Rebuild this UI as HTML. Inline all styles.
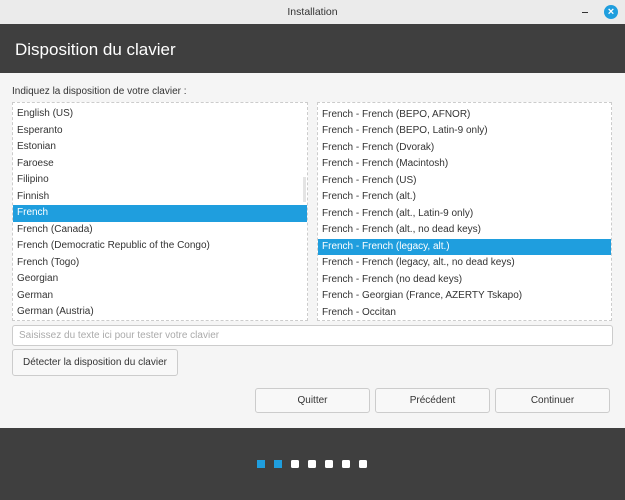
<!DOCTYPE html><html><head><style>
*{margin:0;padding:0;box-sizing:border-box}
body{width:625px;height:500px;background:#f5f5f5;font-family:"Liberation Sans",sans-serif;font-size:10px;color:#333;position:relative;overflow:hidden}
.a{position:absolute}
.tb{left:0;top:0;width:625px;height:24px;background:#ebebeb;text-align:center;line-height:24px;font-size:10.5px;color:#333}
.hd{left:0;top:24px;width:625px;height:49px;background:#3f3f3f;color:#fff;font-size:17px;padding-left:15px;line-height:51px}
.list{background:#fff;border:1px dashed #ccc;overflow:hidden}
.r{height:16.5px;line-height:16.5px;padding-left:4px;white-space:nowrap}
.s{background:#1f9ede;color:#fff}
.btn{background:#f8f8f8;border:1px solid #ccc;border-radius:3px;text-align:center;font-size:10px}
.d{top:460px;width:8px;height:8px;background:#fff;border-radius:1.5px}
.bt{left:0;top:428px;width:625px;height:72px;background:#3f3f3f}
</style></head><body>
<div class="a tb">Installation</div>
<div class="a" style="left:582px;top:12px;width:6px;height:1px;background:#333"></div>
<div class="a" style="left:604px;top:5px;width:14px;height:14px;border-radius:50%;background:#1f9ede;color:#fff;font-size:11px;font-weight:bold;line-height:14px;text-align:center">×</div>
<div class="a hd">Disposition du clavier</div>
<div class="a" style="left:12px;top:86px;font-size:10px">Indiquez la disposition de votre clavier :</div>
<div class="a list" style="left:12px;top:102px;width:296px;height:219px;padding-top:3px">
<div class="r">English (US)</div><div class="r">Esperanto</div><div class="r">Estonian</div><div class="r">Faroese</div><div class="r">Filipino</div><div class="r">Finnish</div><div class="r s">French</div><div class="r">French (Canada)</div><div class="r">French (Democratic Republic of the Congo)</div><div class="r">French (Togo)</div><div class="r">Georgian</div><div class="r">German</div><div class="r">German (Austria)</div>
</div>
<div class="a" style="left:303px;top:177px;width:3px;height:25px;background:#e4e4e4"></div>
<div class="a list" style="left:317px;top:102px;width:295px;height:219px;padding-top:3.5px">
<div class="r">French - French (BEPO, AFNOR)</div><div class="r">French - French (BEPO, Latin-9 only)</div><div class="r">French - French (Dvorak)</div><div class="r">French - French (Macintosh)</div><div class="r">French - French (US)</div><div class="r">French - French (alt.)</div><div class="r">French - French (alt., Latin-9 only)</div><div class="r">French - French (alt., no dead keys)</div><div class="r s">French - French (legacy, alt.)</div><div class="r">French - French (legacy, alt., no dead keys)</div><div class="r">French - French (no dead keys)</div><div class="r">French - Georgian (France, AZERTY Tskapo)</div><div class="r">French - Occitan</div>
</div>
<div class="a" style="left:12px;top:325px;width:601px;height:21px;background:#fff;border:1px solid #ccc;border-radius:3px;color:#aaa;line-height:20px;padding-left:6px">Saisissez du texte ici pour tester votre clavier</div>
<div class="a btn" style="left:12px;top:349px;width:166px;height:27px;line-height:26px">Détecter la disposition du clavier</div>
<div class="a btn" style="left:255px;top:388px;width:115px;height:25px;line-height:24px">Quitter</div>
<div class="a btn" style="left:375px;top:388px;width:115px;height:25px;line-height:24px">Précédent</div>
<div class="a btn" style="left:495px;top:388px;width:115px;height:25px;line-height:24px">Continuer</div>
<div class="a bt"></div>
<div class="a d" style="left:257px;background:#1f9ede;border-radius:0"></div>
<div class="a d" style="left:274px;background:#1f9ede;border-radius:0"></div>
<div class="a d" style="left:291px"></div><div class="a d" style="left:308px"></div><div class="a d" style="left:325px"></div><div class="a d" style="left:342px"></div><div class="a d" style="left:359px"></div>
</body></html>
